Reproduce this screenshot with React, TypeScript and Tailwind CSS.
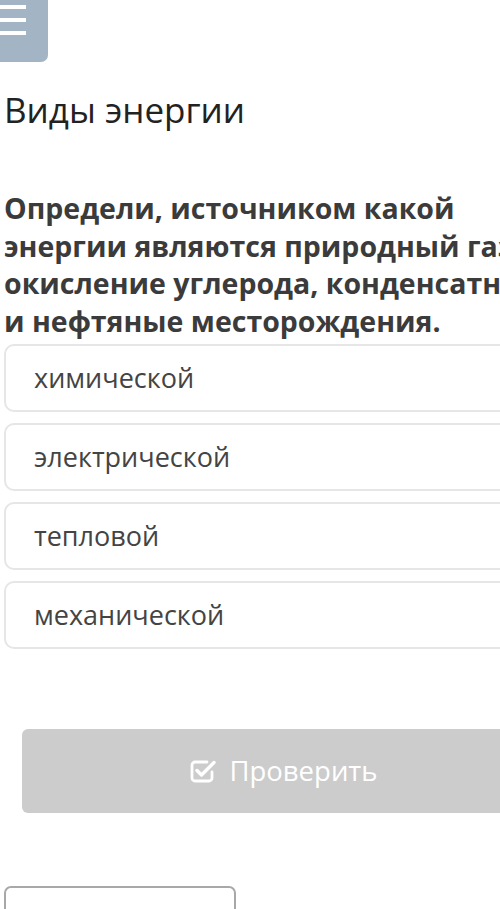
import React from "react";

const options = ["химической", "электрической", "тепловой", "механической"];

function CheckSquareIcon() {
  return (
    <svg width="28" height="28" viewBox="0 0 28 28" fill="none">
      <path
        d="M23 15v6a3 3 0 0 1-3 3H6a3 3 0 0 1-3-3V8a3 3 0 0 1 3-3h12"
        stroke="white"
        strokeWidth="2.8"
        strokeLinecap="round"
      />
      <path
        d="M8 13.5l4.5 4.5L25 5.5"
        stroke="white"
        strokeWidth="3.4"
        strokeLinecap="round"
        strokeLinejoin="round"
      />
    </svg>
  );
}

export default function App() {
  return (
    <div
      className="w-[500px] h-[909px] overflow-hidden bg-white"
      style={{ fontFamily: '"Open Sans", "Noto Sans", sans-serif' }}
    >
      <div className="w-[545px]">
        {/* menu toggle */}
        <div className="-ml-[12px] -mt-[8px] w-[60px] h-[70px] rounded-[7px] bg-[#a3b5c5] flex flex-col gap-[9px] pt-[13px] pl-[8px]">
          <div className="w-[30px] h-[4px] bg-white" />
          <div className="w-[30px] h-[4px] bg-white" />
          <div className="w-[30px] h-[4px] bg-white" />
        </div>

        <h1 className="mt-[24px] pl-[4px] text-[35px] leading-[48px] text-[#222]">Виды энергии</h1>

        <p className="mt-[56px] pl-[4px] text-[28.5px] leading-[37.5px] font-bold text-[#3b3b3b] whitespace-nowrap">
          Определи, источником какой
          <br />
          энергии являются природный газ,
          <br />
          окисление углерода, конденсатные
          <br />
          и нефтяные месторождения.
        </p>

        <div className="mt-[4px] ml-[4px] flex flex-col gap-[11px]">
          {options.map((o) => (
            <div
              key={o}
              className="h-[68px] rounded-[10px] border-2 border-[#e6e6e6] flex items-center pl-[28px] text-[27px] text-[#444]"
            >
              {o}
            </div>
          ))}
        </div>

        <div className="mt-[80px] ml-[22px] h-[84px] rounded-[6px] bg-[#cccccc] flex items-center justify-center gap-[12px] text-white text-[27.5px]">
          <CheckSquareIcon />
          <span>Проверить</span>
        </div>

        <div className="mt-[73px] ml-[4px] w-[232px] h-[60px] rounded-[7px] border-2 border-[#a8a8a8]" />
      </div>
    </div>
  );
}
